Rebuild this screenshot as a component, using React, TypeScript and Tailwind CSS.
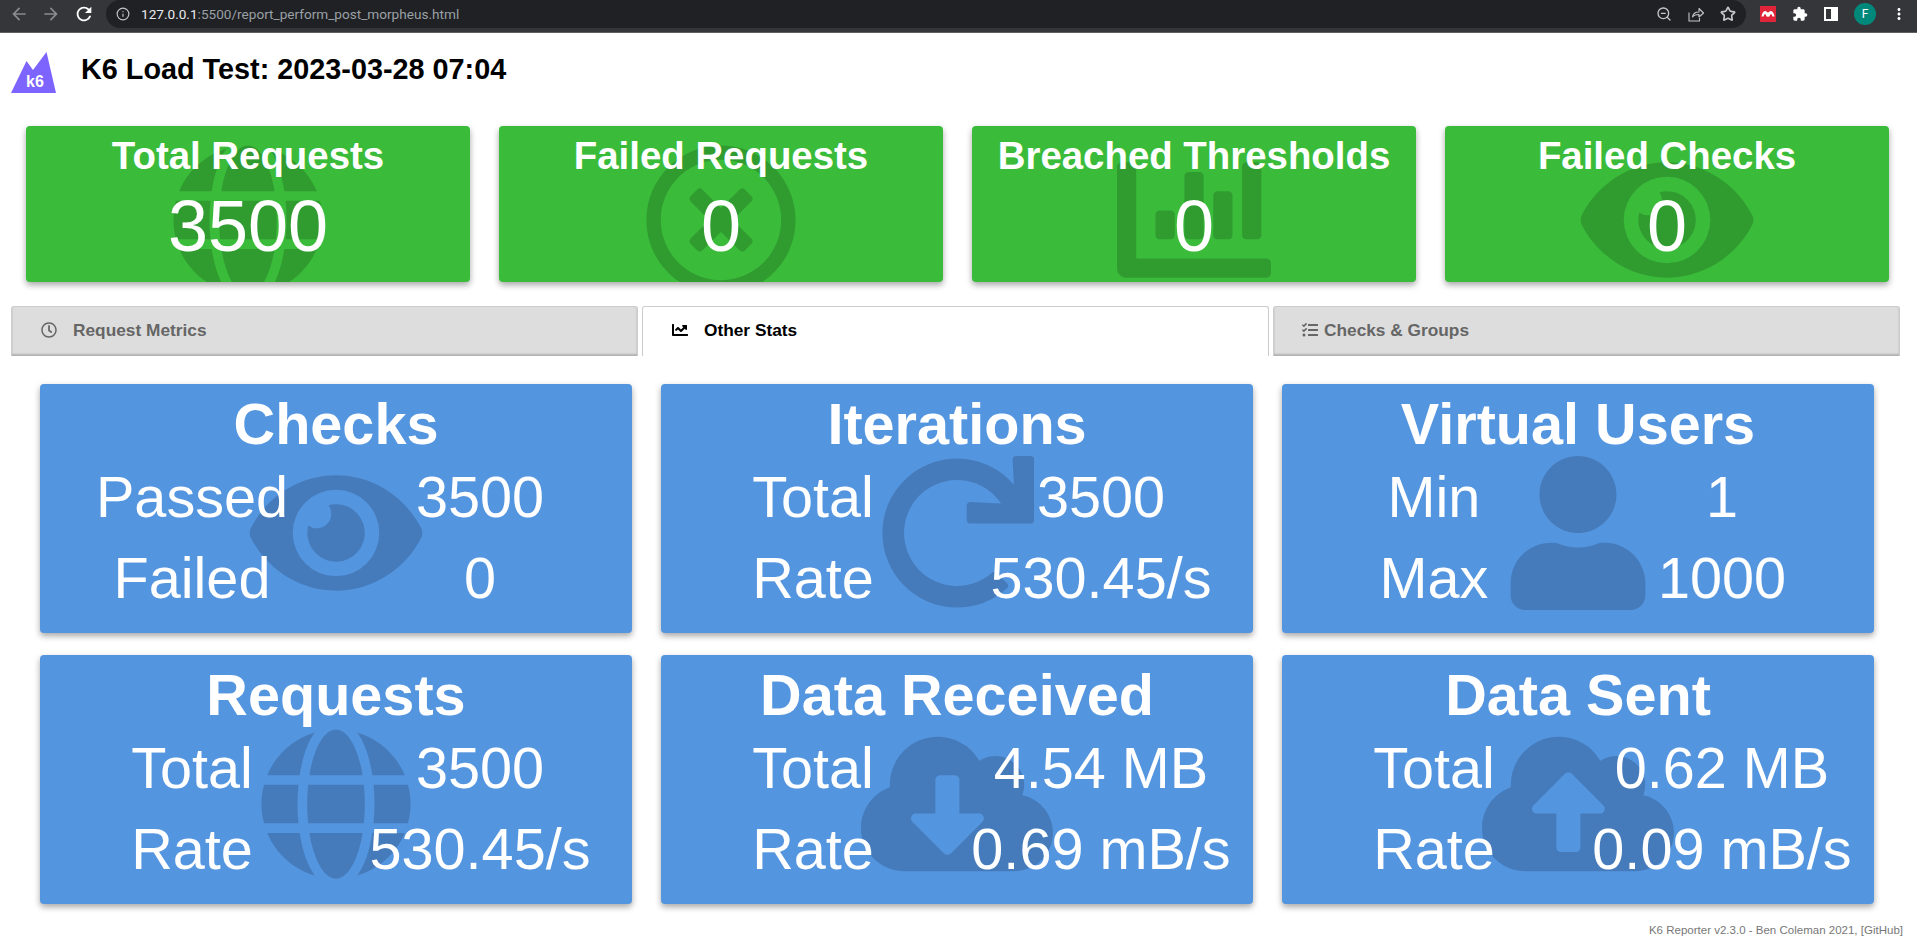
import type { ComponentType } from 'react'
import {
  FaChartBar,
  FaChartLine,
  FaCloudDownloadAlt,
  FaCloudUploadAlt,
  FaEye,
  FaGlobe,
  FaRedo,
  FaRegClock,
  FaRegTimesCircle,
  FaTasks,
  FaUser,
} from 'react-icons/fa'
import { MdArrowBack, MdArrowForward, MdExtension, MdMoreVert, MdRefresh } from 'react-icons/md'
import { Info, Star, ZoomOut } from 'lucide-react'

type Icon = ComponentType<{ className?: string }>

const SUMMARY: { title: string; value: string; icon: Icon; iconWidth: string }[] = [
  { title: 'Total Requests', value: '3500', icon: FaGlobe, iconWidth: 'w-[154px]' },
  { title: 'Failed Requests', value: '0', icon: FaRegTimesCircle, iconWidth: 'w-[154px]' },
  { title: 'Breached Thresholds', value: '0', icon: FaChartBar, iconWidth: 'w-[154px]' },
  { title: 'Failed Checks', value: '0', icon: FaEye, iconWidth: 'w-[173px]' },
]

const STATS: { title: string; icon: Icon; iconWidth: string; rows: [string, string][] }[] = [
  { title: 'Checks', icon: FaEye, iconWidth: 'w-[173px]', rows: [['Passed', '3500'], ['Failed', '0']] },
  { title: 'Iterations', icon: FaRedo, iconWidth: 'w-[154px]', rows: [['Total', '3500'], ['Rate', '530.45/s']] },
  { title: 'Virtual Users', icon: FaUser, iconWidth: 'w-[154px]', rows: [['Min', '1'], ['Max', '1000']] },
  { title: 'Requests', icon: FaGlobe, iconWidth: 'w-[154px]', rows: [['Total', '3500'], ['Rate', '530.45/s']] },
  { title: 'Data Received', icon: FaCloudDownloadAlt, iconWidth: 'w-[192px]', rows: [['Total', '4.54 MB'], ['Rate', '0.69 mB/s']] },
  { title: 'Data Sent', icon: FaCloudUploadAlt, iconWidth: 'w-[192px]', rows: [['Total', '0.62 MB'], ['Rate', '0.09 mB/s']] },
]

function BrowserBar() {
  return (
    <div className="h-[33px] flex items-start bg-[#35363a] border-b border-[#5f6062] font-['Roboto',sans-serif]">
      <div className="flex items-center h-[28px] pl-[9px] gap-[12px] text-[#8a8b8e]">
        <MdArrowBack className="w-5 h-5" />
        <MdArrowForward className="w-5 h-5" />
        <MdRefresh className="w-[22px] h-[22px] text-white" />
      </div>
      <div className="ml-[11px] w-[1640px] h-[28px] rounded-[14px] bg-[#202124] flex items-center pl-[10px] pr-[10px]">
        <Info className="w-[14px] h-[14px] text-[#c4c6c9]" />
        <span className="ml-[11px] text-[13.6px] text-[#e8eaed]">
          127.0.0.1<span className="text-[#9aa0a6]">:5500/report_perform_post_morpheus.html</span>
        </span>
        <div className="flex-1" />
        <div className="flex items-center gap-[16px] text-[#c4c6c9]">
          <ZoomOut className="w-[16px] h-[16px]" />
          <svg className="w-[16px] h-[16px]" viewBox="0 0 16 16" fill="none" stroke="currentColor" strokeWidth="1.100" strokeLinejoin="round">
            <path d="M1 6.500V15h10.500v-3" />
            <path d="M4.500 11c.5-3.500 3-5 6.500-5V2.500L15.500 7 11 11V8.500c-3 0-5 .5-6.500 2.500z" />
          </svg>
          <Star className="w-[16px] h-[16px]" strokeWidth={2.500} />
        </div>
      </div>
      <div className="flex items-center h-[28px] pl-[14px] gap-[16px]">
        <svg className="w-4 h-4" viewBox="0 0 16 16">
          <rect width="16" height="16" fill="#e0243a" />
          <path d="M1.500 10.500C2 7.500 3.200 5 5 5c1.500 0 2.300 1.500 3 1.500S9.500 5 11 5c1.800 0 3 2.500 3.500 5.500h-2C12 9 11.500 8 11 8s-1 1-1.500 2.500h-3C6 9 5.500 8 5 8s-1 1-1.500 2.500z" fill="#fff" />
          <circle cx="8" cy="9.500" r="1" fill="#fff" />
        </svg>
        <MdExtension className="w-4 h-4 text-white" />
        <div className="w-[14px] h-[14px] border-2 border-r-[7px] border-white" />
        <div className="w-[22px] h-[22px] rounded-full bg-[#00897b] flex items-center justify-center text-[12px] text-white">F</div>
        <MdMoreVert className="w-[18px] h-[18px] text-white -ml-[2px]" />
      </div>
    </div>
  )
}

function K6Logo() {
  return (
    <svg className="w-[45px] h-[41px] flex-shrink-0" viewBox="0 0 45 41">
      <path d="M0 41 15.500 9 22 18 35.500 0 45 41z" fill="#7d64ff" />
      <text x="15" y="35" fontSize="16" fontWeight="700" fill="#fff" fontFamily="'Liberation Sans', sans-serif">k6</text>
    </svg>
  )
}

export default function App() {
  return (
    <div className="h-[944px] overflow-hidden bg-white font-['Liberation_Sans',Arial,sans-serif]">
      <BrowserBar />

      {/* Header */}
      <header className="h-[93px] pt-[19px] pl-[11px] flex items-start">
        <K6Logo />
        <h1 className="ml-[25px] mt-[3px] text-[28.8px] leading-none font-bold text-black">K6 Load Test: 2023-03-28 07:04</h1>
      </header>

      {/* Summary */}
      <div className="grid grid-cols-4 gap-[29px] pl-[26px] pr-[28px]">
        {SUMMARY.map((s) => (
          <div key={s.title} className="relative overflow-hidden h-[156px] pt-[11px] rounded-[4px] bg-[#3abc3a] text-white text-center shadow-[0_3px_6px_rgba(0,0,0,0.35)]">
            <s.icon className={`absolute top-[17px] left-1/2 -translate-x-1/2 h-[154px] ${s.iconWidth} text-black/[0.17]`} />
            <div className="relative text-[38.4px] leading-none font-bold">{s.title}</div>
            <div className="relative mt-[15px] text-[72px] leading-none">{s.value}</div>
          </div>
        ))}
      </div>

      {/* Tabs */}
      <div className="mt-[24px] grid grid-cols-3 gap-[4px] pl-[11px] pr-[17px] text-[17.3px] font-bold">
        <div className="h-[50px] pl-[29px] pt-[14px] flex items-start rounded-t-[3px] border border-b-0 border-[#ccc] bg-[#ddd] text-[#666] shadow-[inset_0_-2px_2px_rgba(0,0,0,0.2)]">
          <FaRegClock className="w-4 h-4 mt-[1px]" />
          <span className="ml-4 leading-[18px]">Request Metrics</span>
        </div>
        <div className="h-[50px] pl-[29px] pt-[14px] flex items-start rounded-t-[3px] border border-b-0 border-[#ccc] bg-white text-black">
          <FaChartLine className="w-4 h-4 mt-[1px]" />
          <span className="ml-4 leading-[18px]">Other Stats</span>
        </div>
        <div className="h-[50px] pl-[28px] pt-[14px] flex items-start rounded-t-[3px] border border-b-0 border-[#ccc] bg-[#ddd] text-[#666] shadow-[inset_0_-2px_2px_rgba(0,0,0,0.2)]">
          <FaTasks className="w-4 h-4 mt-[1px]" />
          <span className="ml-[6px] leading-[18px]">Checks &amp; Groups</span>
        </div>
      </div>

      {/* Metric cards */}
      <div className="mt-[28px] grid grid-cols-3 gap-x-[29px] gap-y-[22px] pl-[40px] pr-[43px]">
        {STATS.map((m) => (
          <div key={m.title} className="relative overflow-hidden h-[249px] pt-[12px] px-2 rounded-[4px] bg-[#5495e0] text-white text-center shadow-[0_3px_6px_rgba(0,0,0,0.35)]">
            <m.icon className={`absolute top-[72px] left-1/2 -translate-x-1/2 h-[154px] ${m.iconWidth} text-black/[0.17]`} />
            <div className="relative text-[57.6px] leading-none font-bold">{m.title}</div>
            <div className="relative mt-[3px] grid grid-cols-2 text-[57.6px] leading-[81px]">
              {m.rows.map(([label, value]) => (
                <div key={label} className="contents">
                  <div>{label}</div>
                  <div>{value}</div>
                </div>
              ))}
            </div>
          </div>
        ))}
      </div>

      <footer className="mt-[18px] pr-[14px] text-right text-[11.52px] leading-4 text-[#777]">
        K6 Reporter v2.3.0 - Ben Coleman 2021, [GitHub]
      </footer>
    </div>
  )
}
